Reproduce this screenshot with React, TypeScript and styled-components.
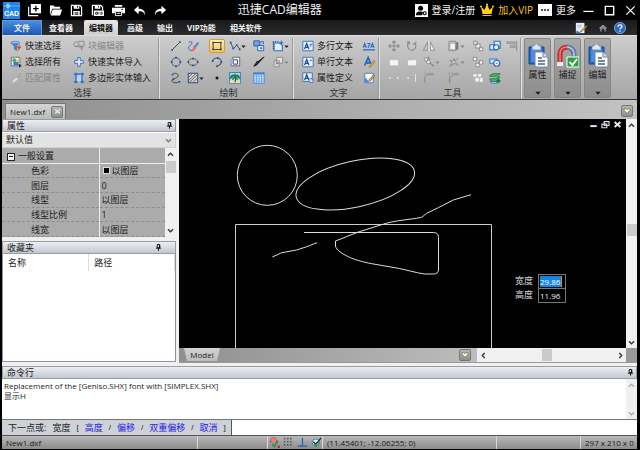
import React from "react";
import styled, { createGlobalStyle, css } from "styled-components";

const GlobalStyle = createGlobalStyle`
  *, *::before, *::after { box-sizing: border-box; }
  body { margin: 0; background: #000; }
  body, button, input, select, table {
    font-family: "Open Sans", "Noto Sans CJK SC", sans-serif;
    font-size: 9px;
    line-height: 12px;
    color: #1c1c1c;
  }
  button, input, select { margin: 0; padding: 0; border: 0; background: none; border-radius: 0; }
`;

/* ---------- icons ---------- */

const B = "#1d4fa8";
const G = "#858585";
const W = "#f4f4f4";

const dots = (pts: number[][], color = B) =>
  pts.map(([x, y], i) => <rect key={i} x={x - 1} y={y - 1} width="2" height="2" fill={color} />);

const icons: Record<string, React.ReactNode> = {
  newFile: (<><path d="M3 0h11v10H3z" fill="#fff" /><path d="M8.500 2v6M5.500 5h6" stroke="#000" strokeWidth="1.400" /><path d="M.7 3v9.500H11" fill="none" stroke="#fff" strokeWidth="1.200" /></>),
  open: (<><path d="M1 1.500h4l1 1.500h6v2H3.500L1 12z" fill="#fff" /><path d="M4 6h10l-2 6.500H1.800z" fill="#fff" /></>),
  save: (<><path d="M1.500 1.500h9l2 2v9h-11z" fill="none" stroke="#fff" strokeWidth="1.300" /><path d="M4 1.500h6V5H4zM3.500 7.500h7v5h-7z" fill="#fff" /><path d="M8 2v2M5 9.500h4M5 11h4" stroke="#000" /></>),
  saveAs: (<><path d="M1.500 12V1.500h9l2 2V7" fill="none" stroke="#fff" strokeWidth="1.300" /><path d="M4 1.500h6V5H4zM3 7h11v6H3z" fill="#fff" /><path d="M8 2v2M5 9h2v2H5zM8.500 9v2M10 9h2v2h-2" fill="none" stroke="#000" strokeWidth=".8" /></>),
  print: (<><path d="M3 1h8v2H3zM0 4h14v6h-3V8H3v2H0z" fill="#fff" /><path d="M3.700 8h6.600v4.500H3.700z" fill="#000" stroke="#fff" /><path d="M5 10h4" stroke="#fff" /><path d="M10 5.700h2" stroke="#000" /></>),
  undo: <path d="M6 2 1 6.500 6 11V8c4-.5 6 1 6.500 4C13.500 7.500 11 5 6 5z" fill="#fff" />,
  redo: <path d="M8 2l5 4.500L8 11V8c-4-.5-6 1-6.500 4C.5 7.500 3 5 8 5z" fill="#fff" />,
  user: (<><path d="M0 0h14v14H0z" fill="#fff" /><circle cx="6" cy="4.700" r="2.700" fill="#000" /><path d="M1 12c0-4 3-4 5-4 1.500 0 2.500.2 3 .6L8 10v2z" fill="#000" /><circle cx="10.500" cy="10" r="1.600" fill="none" stroke="#000" strokeWidth="1.200" /></>),
  crown: (<><path d="M1 3.500 4.500 7 7 1l2.500 6L13 3.500 11.500 11h-9z" fill="#ffd21c" /><path d="M2.500 12h9v1h-9z" fill="#f6b800" /><circle cx="7" cy="1.500" r="1" fill="#ffd21c" /><circle cx="1" cy="3.500" r="1" fill="#ffd21c" /><circle cx="13" cy="3.500" r="1" fill="#ffd21c" /></>),
  more: (<><path d="M0 1h14v12H0z" fill="#fff" /><path d="M3 7h2M6 7h2M9 7h2" stroke="#222" strokeWidth="1.600" /></>),
  min: <path d="M1.500 8h11" stroke="#fff" strokeWidth="1.300" />,
  max: <path d="M2.500 2.500h9v9h-9z" fill="none" stroke="#fff" strokeWidth="1.500" />,
  close: <path d="M2.500 2.500l9 9M11.500 2.500l-9 9" stroke="#fff" strokeWidth="1.300" />,
  notes: (<><path d="M1 1h10v12H1z" fill="#e7effc" /><path d="M3 4h5M3 6h4" stroke="#8fb4ea" /><path d="M13 4 7 10l-1 2 2-1 6-6z" fill="#f3a51b" stroke="#77410a" strokeWidth=".5" /><path d="M2 10l4 2-1 1H1z" fill="#3d7ad8" /></>),
  up: (<path d="M3 7.500 7 4l4 3.500M4.500 11V8.500L7 6.500l2.500 2V11" fill="none" stroke="#9aa2ae" strokeWidth="1.400" />),
  help: (<><circle cx="7" cy="7" r="6.500" fill="#2c66c4" stroke="#a9c8f4" strokeWidth=".8" /><path d="M4.800 5.500c0-3 4.500-2.700 4.500-.2C9.300 7 7 6.700 7 8.500" fill="none" stroke="#fff" strokeWidth="1.500" /><path d="M6.200 10h1.600v1.500H6.200z" fill="#fff" /></>),

  quick: (<><path d="M1 3h10L7.500 7v5L5 10.500V7z" fill="#3d8ede" stroke="#175297" strokeWidth=".6" /><ellipse cx="6" cy="3" rx="5" ry="1.500" fill="#90c8f6" stroke="#175297" strokeWidth=".5" /><path d="M12 4 7.500 9.500H10L8 14l5.500-6H11z" fill="#ef3d2e" /></>),
  selectAll: (<><path d="M1.500 1.500h10v10h-10z" fill="#e9f2fc" stroke="#222" strokeDasharray="1.500 1" /><circle cx="5" cy="5" r="2.300" fill="#4baf4d" /><path d="M4 7h6v4H4z" fill="#3778d2" /><path d="M7.500 4h3v3h-3z" fill="#efc53b" /><path d="M10 9l4 3-2 .3-1 1.700z" fill="#111" /></>),
  match: (<><path d="M12.500 1 8 6l2 2 3-5z" fill="#a7a7a7" /><path d="M8 6 3 9l-1 4c3 0 6-2 8-5z" fill="#dcdcdc" stroke="#a0a0a0" strokeWidth=".6" /></>),
  blockEdit: (<><circle cx="4" cy="5" r="3" fill="none" stroke={G} /><path d="M6 1.500h7v6H8M3 7h6M7 9l4-3" fill="none" stroke={G} /><path d="M8 8h4l-2 5z" fill="#999" /></>),
  cross: (<path d="M5.500 2h3v3.500H12v3H8.500V12h-3V8.500H2v-3h3.500z" fill="#eaf3ff" stroke="#2463bd" />),
  polySolid: (<><path d="M3 2.500h8v8H3z" fill="#b7d4f6" /><path d="M3.500 1v12M10.500 1v12M1 2.500h12M1 11.500h4M9 11.500h4" fill="none" stroke="#1f65c8" strokeWidth="1.500" /></>),

  line: (<><path d="M3 11 11 3" stroke="#333" />{dots([[2.500, 11.500], [11.500, 2.500]])}</>),
  sketch: (<><path d="M2 3c4-3 5 1 2 3s-3 5 0 6 4-1 4-2" fill="none" stroke="#235cb6" /><path d="M13 2 8 7l-1 3 3-1 4-5z" fill="#408fe5" /><path d="M8 7l3 2-3 3.500-2-1z" fill="#ef6a5a" /></>),
  rect: (<><path d="M2.500 3h9v8h-9z" fill="none" stroke="#444" strokeWidth="1.200" />{dots([[2.500, 3], [11.500, 3], [2.500, 11], [11.500, 11]])}</>),
  poly: (<><path d="M2 3l3 7 4-4 3.500 4.500" fill="none" stroke="#444" />{dots([[2, 3], [5, 10], [9, 6], [12.500, 11]])}</>),
  insert: (<><path d="M1 1h7v6H1z" fill="#6da7ea" stroke={B} /><path d="M5.500 6.500h7v6h-7z" fill="#e8f2ff" stroke={B} /><path d="M8 9.500h3M9.500 8v3M9 2h3v3" fill="none" stroke={B} /></>),
  region: (<><path d="M2.500 3.500h6L12 6v6.500H2.500z" fill="#e4f0ff" stroke="#2f6dc9" strokeWidth="1.300" /><path d="M1 2h7M1.500 2v10" stroke="#1b4796" strokeDasharray="1.500 1" strokeWidth="1.200" /><path d="M11 0l.8 2.200L14 3l-2.200.8L11 6l-.8-2.200L8 3l2.200-.8z" fill="#2f6dc9" /></>),
  circle: (<><circle cx="7" cy="7" r="5" fill="none" stroke="#555" />{dots([[7, 2], [12, 7], [7, 12], [2, 7]])}</>),
  ellipse: (<><ellipse cx="7" cy="7" rx="5.500" ry="4" fill="none" stroke="#555" />{dots([[7, 3], [12.500, 7], [7, 11], [1.500, 7]])}</>),
  arc: (<><path d="M2 6c1-5 9-5 10 0 0 3-2 5-5 5.500" fill="none" stroke="#555" strokeWidth="1.200" />{dots([[2, 6], [8, 2.500], [12, 7], [7, 12]])}</>),
  wipe: (<><path d="M4.500 1.500h8v10h-10v-7h2z" fill="#f2f6fd" stroke="#4a5b7d" /><path d="M5 4.500h5v5H5z" fill="none" stroke="#333" /><path d="M1 4h4v5H1z" fill="#8db5e8" /></>),
  brush: (<><path d="M13 1 6.500 8l-1-1z" fill="#111" stroke="#111" /><path d="M7 7 5 6 1 12l4-2z" fill="#23324f" stroke="#111" /></>),
  grayCopy: (<><path d="M5.500 1.500h7v7h-7zM2.500 5.500h6v7h-6z" fill="#e0e0e0" stroke={G} /><path d="M4 9.500l2-3 2 3z" fill={G} /></>),
  spline: (<><path d="M3 2.500c4-3 9 1 5 4-5 2-7 2-5 5 2 2 6 1 7 0" fill="none" stroke="#3a3a3a" />{dots([[3, 3], [4, 8.500], [11, 11.500]])}</>),
  hatch: (<><path d="M1.500 1.500h11v11h-11z" fill="#d9d4c4" stroke="#284f8f" strokeWidth="1.200" /><path d="M2 6l4-4M2 10l8-8M3 12l9-9M7 12l5-5" stroke="#555" /></>),
  point: <path d="M5.500 5.500h3v3h-3z" fill="#111" />,
  image: (<><path d="M.5.500h13v13H.5z" fill="#a6dcf5" stroke="#2a71bd" /><path d="M1 10h12v3H1z" fill="#f1dfa0" /><path d="M7 12c1-3 1-5 0-7" fill="none" stroke="#744a1d" strokeWidth="1.500" /><path d="M7 5C4 2 2 5 2 7l3-2M7 5c3-3 5 0 5 2L9 5M7 5l-3 4M7 5l3 4M7 5V2" fill="none" stroke="#178044" strokeWidth="1.600" /></>),
  table: (<><path d="M1 1h12v12H1z" fill="#eef6ff" stroke="#2f79d8" /><path d="M1 2h12" stroke="#2f79d8" strokeWidth="2" /><path d="M4 1v12M7 1v12M10 1v12M1 5h12M1 8h12M1 10.500h12" stroke="#5c9eea" /></>),

  mtext: (<><path d="M1 1.500h12v11H1z" fill="#e8f1ff" stroke="#3368b6" /><path d="M3 10.500 5.500 4 8 10.500M4 8.500h3" fill="none" stroke="#174da8" strokeWidth="1.500" /><path d="M9 5h3M9 7h2" stroke="#174da8" /></>),
  stext: (<><path d="M1 1.500h12v11H1z" fill="#e8f1ff" stroke="#3368b6" /><path d="M3 10.500 5.500 4 8 10.500M4 8.500h3" fill="none" stroke="#174da8" strokeWidth="1.500" /><path d="M9 5h3" stroke="#174da8" /></>),
  attr: (<><path d="M1 1h11v10H1z" fill="#e8f1ff" stroke="#3368b6" /><path d="M3 9.500 5.500 3 8 9.500M4 7.500h3" fill="none" stroke="#174da8" strokeWidth="1.500" /><circle cx="10.500" cy="10" r="2.500" fill="#c6dcf6" stroke="#275faf" strokeDasharray="1 .8" strokeWidth="1.500" /></>),
  textFit: (<><path d="M0 9l2-5 2 5M.8 7.500h2.400M5 4h3L6 9M9 9l2-5 2 5M9.800 7.500h2.400" fill="none" stroke="#2769c7" strokeWidth="1.200" /><path d="M0 11.500h14" stroke="#2769c7" strokeWidth="1.500" /></>),
  textStyle: (<><path d="M2 11 6 2l3 7M4 8h5" fill="none" stroke="#1c65cb" strokeWidth="2" /><path d="M13 5 8 11l-1 2 3-1 4-5z" fill="#efa62a" stroke="#725018" strokeWidth=".5" /></>),
  textEdit: (<><path d="M2 1.500h10v11H2z" fill="#f3f8ff" stroke="#3f78c4" /><path d="M3 6l4 6H2z" fill="#3e86e2" /><path d="M12.500 3 7 9l-.5 2L9 10l5-5.500z" fill="#e79f29" stroke="#333" strokeWidth=".5" /></>),

  move: (<path d="M7 1v12M1 7h12M5 3l2-2 2 2M5 11l2 2 2-2M3 5 1 7l2 2M11 5l2 2-2 2" fill="none" stroke={G} strokeWidth="1.200" />),
  rotate: (<path d="M4 2C0 5 2 11 6 12c4 .5 7-4 5-8l-3 1M11 4l1-2M4 2H1M4 2v3" fill="none" stroke={G} strokeWidth="1.200" />),
  mirror: (<><path d="M5.500 2v10h-5z" fill="#cecece" stroke={G} /><path d="M8.500 2v10h5z" fill="#ededed" stroke={G} /><path d="M7 1v12" stroke="#fff" /></>),
  array: (<><path d="M1 1.500h8v11H1z" fill="#bcbcbc" stroke="#8a8a8a" /><path d="M3 4.500h5v6H3z" fill={W} /><path d="M9.500 2.500H12v9H9.500z" fill="#777" /></>),
  stack: (<path d="M2 1.500h4v4H2zM4.500 4.500h5v5h-5zM8.500 8.500h4v4h-4z" fill="#ececec" stroke={G} />),
  blueBox: (<><path d="M6 1.500h7v8H6zM1 5.500h6v6H1z" fill="#dcecff" stroke="#2c6fca" strokeWidth="1.300" /><circle cx="8.500" cy="8.500" r="3" fill="#f0f7ff" stroke="#2563ba" strokeWidth="1.300" /></>),
  align: (<><path d="M1 2h10v2H1zM5 6h6v3H5z" fill="#aaa" stroke={G} strokeWidth=".6" /><path d="M12.500 1v12" stroke={G} /></>),
  boxA: (<path d="M1.500 4.500h2v-1h2v1h3v-1h2v1h2v7h-11z" fill={W} stroke="#b5b5b5" />),
  boxB: (<path d="M1.500 4.500h7v-1h2v1h2v7h-11z" fill={W} stroke="#b5b5b5" />),
  link: (<><circle cx="3.500" cy="4" r="2" fill="#e8e8e8" stroke={G} /><circle cx="6.500" cy="7" r="2.200" fill="#e8e8e8" stroke={G} /><path d="M8 8l5 4M8 5l-2-4" stroke={G} strokeWidth="1.400" /></>),
  explode: (<path d="M12 2 8 6l4 5-5-3-5 4 3-5-3-2 4 1 1-3 1 3M4 12l4-4" fill="#ddd" stroke={G} />),
  pair: (<path d="M1.500 1.500h4v4h-4zM8.500 5.500h4v4h-4zM4.500 8.500h4v4h-4z" fill={W} stroke={G} />),
  blueArc: (<><path d="M1 3.500h8v5H1z" fill="#cee4ff" stroke="#3279d5" strokeWidth="1.300" /><circle cx="9" cy="8.500" r="3.500" fill="#f4f9ff" stroke="#2563ba" strokeWidth="1.300" /><path d="M8 8.500h2" stroke={B} /></>),
  gap: (<path d="M1 5.500h3v3H1zM10 5.500h3v3h-3zM6 7h2" fill={W} stroke="#aaa" />),
  extend: (<><path d="M1 5.500h3v3H1zM5 7h5" fill={W} stroke="#aaa" /><path d="M10 2h2v10h-2z" fill={W} stroke="#aaa" /></>),
  fillet: (<><path d="M2 13V7c0-3 2-4 4-4h7" fill="none" stroke={G} /><path d="M1 1.500h12" stroke={G} strokeDasharray="1 1" /></>),
  chamfer: (<><path d="M2 13V7l4-4h7" fill="none" stroke={G} /><path d="M1.500 12V1.500H13" fill="none" stroke={G} strokeDasharray="1 1" /></>),
  union: (<><path d="M1 2h5v4H1zM8 6h5v6H8z" fill={W} stroke="#aaa" /><circle cx="9" cy="4" r="2.500" fill={W} stroke="#aaa" /><circle cx="6" cy="9" r="3" fill={W} stroke="#aaa" /></>),
  layers: (<><path d="M1 4l4-2h8l-4 3H1zM1 8h7l4-3v2l-4 4H2z" fill="#4dbf5d" stroke="#137d38" /><path d="M2 11h7v2H3z" fill="#d5f0d9" stroke="#2563ba" /><path d="M11 8v5M8.500 10.500h5" stroke="#087b27" strokeWidth="1.800" /></>),

  magnet: (<><path d="M2 5c-1 4 2 6 5 6s5-3 4-6z" fill="#bcd9f2" stroke="#3c78b8" /><circle cx="6" cy="4.500" r="3.800" fill="#ec8077" stroke="#c9463c" strokeWidth=".8" /><path d="M4 8.500 6.500 12 11 5" fill="none" stroke="#1b963a" strokeWidth="2" /><path d="M11 11h3v3h-3z" fill="#d22" /></>),
  gridDots: (<>{dots([[2, 2], [6, 2], [10, 2], [2, 6], [6, 6], [10, 6], [2, 10], [6, 10], [10, 10]], "#555")}</>),
  ortho: <path d="M7 1v10M1 11.500h12" stroke="#1f5fb6" strokeWidth="1.500" />,
  osnap: (<><circle cx="6" cy="7" r="4.500" fill="#e2f0ff" stroke="#2b6ab3" /><path d="M13 1 6 9 3 6" fill="none" stroke="#222" strokeWidth="1.500" /><path d="M4 9l2 3 5-6" fill="none" stroke="#1aa43d" strokeWidth="1.500" /></>),

  pin: (<path d="M5 2.500h4v5H5zM3 8h8M7 8v4M8.500 3v5" fill="none" stroke="#111" strokeWidth="1.500" />),
  mdiMin: <path d="M2 9.500h10" stroke="#e3e9ef" strokeWidth="3" />,
  mdiRestore: <path d="M5 2.500h7.500v6H5zM1.500 6.500H9v5.500H1.500z" fill="#000" stroke="#d4dde6" strokeWidth="1.800" />,
  mdiClose: <path d="M2.500 3l9 8M11.500 3l-9 8" stroke="#e3e9ef" strokeWidth="3" />,
  chevUp: <path d="M3 9l4-4 4 4" fill="none" stroke="currentColor" strokeWidth="2" />,
  chevDown: <path d="M3 5l4 4 4-4" fill="none" stroke="currentColor" strokeWidth="2" />,
  chevLeft: <path d="M9 3 5 7l4 4" fill="none" stroke="currentColor" strokeWidth="2" />,
  chevRight: <path d="M5 3l4 4-4 4" fill="none" stroke="currentColor" strokeWidth="2" />,
  caret: <path d="M1 4h12L7 11z" fill="currentColor" />,
  heart: <path d="M2 3h3l2 2 2-2h3v3l-5 5-5-5z" fill="#fffbd0" stroke="#555" />,
};

const Svg = styled.svg<{ $size: number }>`
  display: block;
  flex: none;
  width: ${(p) => p.$size}px;
  height: ${(p) => p.$size}px;
`;

const Icon = ({ name, size = 12 }: { name: string; size?: number }) => (
  <Svg $size={size} viewBox="0 0 14 14" aria-hidden="true">{icons[name]}</Svg>
);

/* ---------- frame ---------- */

const Window = styled.div`
  display: flex;
  flex-direction: column;
  height: 100vh;
  min-height: 400px;
  padding: 0 3px 1px 2px;
  background: #000;
  overflow: hidden;
`;

const TitleBar = styled.header`
  display: flex;
  align-items: center;
  height: 20px;
  flex: none;
  white-space: nowrap;
`;
const QuickAccess = styled.div`
  display: flex;
  align-items: center;
  gap: 8px;
`;
const Logo = styled.svg`
  width: 18px;
  height: 18px;
`;
const IconButton = styled.button`
  display: flex;
  align-items: center;
  justify-content: center;
`;
const Title = styled.h1`
  flex: 1;
  margin: 0;
  padding-right: 22px;
  text-align: center;
  font-size: 12px;
  line-height: 16px;
  font-weight: 400;
  color: #f2f2f2;
`;
const Account = styled.div`
  display: flex;
  align-items: center;
  gap: 5px;
`;
const AccountButton = styled.button<{ $gold?: boolean }>`
  display: flex;
  align-items: center;
  gap: 4px;
  font-size: 10px;
  line-height: 14px;
  color: ${(p) => (p.$gold ? "#f5c518" : "#f2f2f2")};
`;
const WindowControls = styled.div`
  display: flex;
  gap: 8px;
  padding-left: 6px;
`;

const TabBar = styled.nav`
  display: flex;
  align-items: stretch;
  height: 15px;
  flex: none;
  background: linear-gradient(#1a1a1c, #2c2c2e);
`;
const RibbonTab = styled.button<{ $kind?: "file" | "active" }>`
  padding: 0 7px;
  font-size: 8px;
  font-weight: 700;
  color: #f0f0f0;
  white-space: nowrap;
  ${(p) => p.$kind === "file" && css`
    padding: 0 11px;
    background: linear-gradient(#4a8de0, #1c56b4);
    border: 1px solid #5e9bea;
    border-bottom: 0;
  `}
  ${(p) => p.$kind === "active" && css`
    margin: 0 2px 0 4px;
    padding: 0 5px;
    color: #111;
    background: linear-gradient(#e6e6e6, #cfcfcf);
    border-radius: 2px 2px 0 0;
  `}
`;
const TabTools = styled.div`
  display: flex;
  align-items: center;
  gap: 5px;
  margin-left: auto;
  padding-right: 11px;
  color: #555;
`;

/* ---------- ribbon ---------- */

const Ribbon = styled.div`
  display: flex;
  height: 64px;
  flex: none;
  padding-top: 2px;
  background: linear-gradient(#cdcdcd, #bcbcbc 40%, #a6a6a6);
  border-top: 1px solid #dedede;
`;
const Group = styled.section<{ $width: number }>`
  display: flex;
  flex-direction: column;
  flex: 0 0 ${(p) => p.$width}px;
  border-right: 1px solid #e0e0e0;
  box-shadow: inset -1px 0 0 #999;
`;
const GroupLabel = styled.h2`
  margin: 0;
  padding-left: 4px;
  text-align: center;
  font-size: 9px;
  line-height: 13px;
  font-weight: 400;
  color: #333;
`;
const Commands = styled.div<{ $cols: string; $pad: number }>`
  display: grid;
  grid-template-columns: ${(p) => p.$cols};
  grid-auto-rows: 16px;
  align-items: center;
  padding-left: ${(p) => p.$pad}px;
`;
const Command = styled.button`
  display: flex;
  align-items: center;
  gap: 3px;
  white-space: nowrap;
  &:disabled { color: #858585; }
`;
const ToolButton = styled.button<{ $on?: boolean }>`
  display: flex;
  align-items: center;
  justify-self: start;
  height: 16px;
  padding: 0 2px;
  color: #222;
  &:disabled { color: #858585; }
  ${(p) => p.$on && css`
    height: 14px;
    padding: 0 1px;
    background: linear-gradient(#fff0b5, #ffc24a);
    border: 1px solid #d79a2c;
    border-radius: 2px;
  `}
`;
const BigButtons = styled.div`
  display: flex;
  gap: 3px;
  padding: 0 0 1px 2px;
`;
const BigButton = styled.button`
  display: flex;
  flex-direction: column;
  align-items: center;
  width: 27px;
  padding: 5px 0 1px;
  background: linear-gradient(#a8a8a8, #9a9a9a 50%, #8d8d8d);
  border: 1px solid #858585;
  border-radius: 2px;
  & > span { flex: 1; padding-top: 1px; }
`;
const BigIcon = styled.svg`
  width: 22px;
  height: 24px;
`;

/* ---------- document tabs ---------- */

const DocBar = styled.div`
  display: flex;
  align-items: flex-end;
  height: 20px;
  flex: none;
  padding-right: 4px;
  background: linear-gradient(90deg, #8f8f8f, #c2c2c2);
  border-top: 1px solid #333;
`;
const DocTab = styled.div`
  display: flex;
  align-items: center;
  gap: 6px;
  height: 16px;
  margin-left: 3px;
  padding: 0 2px 0 4px;
  font-size: 8px;
  background: linear-gradient(#d4d4d4, #bcbcbc);
  border: 1px solid #777;
  border-bottom: 0;
`;
const SmallButton = styled.button`
  display: flex;
  align-items: center;
  justify-content: center;
  width: 12px;
  height: 12px;
  background: linear-gradient(#b5b5b5, #8f8f8f);
  border: 1px solid #777;
  border-radius: 2px;
  color: #fffce0;
`;
const DocMenu = styled.div`
  margin-left: auto;
  padding-bottom: 2px;
`;

/* ---------- work area ---------- */

const Work = styled.main`
  display: flex;
  flex: 1;
  min-height: 0;
`;
const Side = styled.aside`
  display: flex;
  flex-direction: column;
  flex: 0 0 177px;
  background: #f0f0f0;
  padding: 0 3px 1px 0;
`;
const PanelHeader = styled.div<{ $pinRight: number }>`
  display: flex;
  align-items: center;
  justify-content: space-between;
  height: 13px;
  flex: none;
  padding: 0 ${(p) => p.$pinRight}px 0 4px;
  background: linear-gradient(#eceef2, #c3c7cf);
  border: 1px solid #999ca3;
`;
const PanelTitle = styled.h2`
  margin: 0;
  font-size: 9px;
  line-height: 11px;
  font-weight: 400;
`;
const SelectWrap = styled.label`
  display: grid;
  align-items: center;
  height: 16px;
  flex: none;
  background: #e3e3e3;
  border: 1px solid #d0d0d0;
  border-top-color: #fff;
  & > * { grid-area: 1 / 1; }
  & > svg { justify-self: end; margin-right: 2px; color: #777; pointer-events: none; }
`;
const Select = styled.select`
  appearance: none;
  width: 100%;
  padding-left: 3px;
  outline: 0;
`;
const Props = styled.div`
  display: flex;
  flex: 0 0 89px;
`;
const PropTable = styled.table`
  flex: 1;
  height: 89px;
  table-layout: fixed;
  border-collapse: collapse;
  background: #ababab;
  line-height: 11px;
  th, td {
    padding: 0 0 0 2px;
    font-weight: 400;
    text-align: left;
    border-bottom: 1px dashed #8d8d8d;
  }
  th { width: 97px; padding-left: 29px; border-right: 1px solid #eee; }
  thead tr { height: 15px; }
  thead th, thead td { border-bottom: 1px solid #eee; }
  thead th { padding-left: 5px; }
`;
const Expander = styled.button`
  width: 8px;
  height: 8px;
  margin-right: 3px;
  vertical-align: -1px;
  border: 1px solid #222;
  background: linear-gradient(#222, #222) center / 4px 1px no-repeat #f2f2f2;
`;
const Swatch = styled.span`
  display: inline-block;
  width: 7px;
  height: 7px;
  margin: 0 2px 0 1px;
  background: #000;
  border: 1px solid #ddd;
`;
const VScroll = styled.div<{ $top: number; $faint?: boolean }>`
  display: grid;
  grid-template-rows: 12px ${(p) => p.$top}fr 12px ${(p) => 100 - p.$top}fr 12px;
  justify-items: center;
  align-items: center;
  flex: 0 0 11px;
  background: #f0f0f0;
  color: ${(p) => (p.$faint ? "#aaa" : "#333")};
`;
const HScroll = styled.div`
  display: grid;
  grid-template-columns: 12px 46fr 12px 54fr 12px;
  justify-items: center;
  align-items: center;
  flex: 0 0 149px;
  background: #f0f0f0;
  color: #333;
`;
const Thumb = styled.div<{ $cell: string }>`
  grid-area: ${(p) => p.$cell};
  width: 10px;
  height: 12px;
  background: #cacaca;
`;
const ArrowButton = styled.button<{ $cell: string }>`
  grid-area: ${(p) => p.$cell};
  color: inherit;
`;
const Favorites = styled.div`
  display: flex;
  flex-direction: column;
  flex: 1;
  margin-top: 4px;
`;
const FavBody = styled.div`
  flex: 1;
  background: #fff;
  border: 1px solid #8d93a0;
  border-top: 0;
`;
const FavTable = styled.table`
  width: 100%;
  border-collapse: collapse;
  table-layout: fixed;
  th {
    height: 17px;
    padding: 0 0 0 5px;
    font-weight: 400;
    text-align: left;
    border-right: 1px solid #ddd;
  }
`;

const DrawColumn = styled.div`
  display: flex;
  flex-direction: column;
  flex: 1;
  min-width: 0;
`;
const DrawRow = styled.div`
  display: flex;
  flex: 1;
  min-height: 0;
`;
const Canvas = styled.div`
  position: relative;
  flex: 1;
  min-width: 0;
  background: #000;
  overflow: hidden;
`;
const Drawing = styled.svg`
  display: block;
  width: 100%;
  height: 100%;
  fill: none;
  stroke: #dcdcdc;
`;
const MdiButtons = styled.div`
  position: absolute;
  top: 1px;
  right: 4px;
  display: flex;
  gap: 3px;
`;
const DynamicInput = styled.div`
  position: absolute;
  left: 336px;
  top: 155px;
  display: grid;
  grid-template-columns: 23px 28px;
  grid-auto-rows: 14px;
  align-items: center;
  label { color: #ddd; }
  input {
    width: 28px;
    height: 15px;
    padding-left: 1px;
    font-size: 8px;
    color: #f0f0f0;
    background: #000;
    border: 1px solid #777;
    outline: 0;
  }
`;
const Field = styled.span`
  display: flex;
  align-items: center;
  width: 28px;
  height: 15px;
  padding-left: 1px;
  border: 1px solid #777;
`;
const SelectedInput = styled.input`
  && {
    width: 22px;
    height: 11px;
    padding: 0;
    border: 0;
    border-right: 1px solid #e08a3c;
    background: #1684e4;
    line-height: 11px;
    color: #fff;
  }
`;
const LayoutBar = styled.div`
  display: flex;
  height: 15px;
  flex: none;
  border-bottom: 1px solid #999;
  background: linear-gradient(90deg, #8f8f8f, #c0c0c0 70%, #999);
`;
const LayoutTab = styled.button`
  height: 13px;
  margin-left: 5px;
  width: 36px;
  clip-path: polygon(0 0, 100% 0, 33px 100%, 3px 100%);
  background: linear-gradient(#d2d2d2, #bdbdbd);
  font-size: 8px;
`;
const LayoutMenu = styled.div`
  display: flex;
  align-items: center;
  margin-left: auto;
  padding-right: 6px;
`;
const Corner = styled.div`
  flex: 0 0 11px;
  background: #999;
`;

/* ---------- command line and status ---------- */

const CommandPanel = styled.section`
  flex: none;
  padding-top: 3px;
  background: #f0f0f0;
`;
const Log = styled.div`
  display: flex;
  height: 41px;
  background: #fff;
  border-bottom: 1px solid #777;
`;
const LogText = styled.div`
  flex: 1;
  padding: 2px 2px 0;
  font-size: 8px;
  line-height: 10px;
  & > p { margin: 0; }
`;
const PromptRow = styled.div`
  display: flex;
  height: 15px;
`;
const Prompt = styled.div`
  display: flex;
  align-items: center;
  gap: 6px;
  flex: 0 0 230px;
  padding-left: 6px;
  background: #cdd1d8;
  border-right: 1px solid #555;
  white-space: nowrap;
`;
const Mark = styled.span`
  font-family: "Liberation Sans", sans-serif;
  font-size: 8px;
`;
const Option = styled.button`
  color: #1e1ee6;
`;
const PromptInput = styled.input`
  flex: 1;
  min-width: 0;
  background: #fff;
  outline: 0;
`;
const Status = styled.footer`
  display: flex;
  height: 14px;
  flex: none;
  background: linear-gradient(#b8b8b8, #8c8c8c);
  border-top: 1px solid #555;
  font-size: 8px;
`;
const Cell = styled.div<{ $width?: number }>`
  display: flex;
  align-items: center;
  gap: 3px;
  flex: ${(p) => (p.$width ? `0 0 ${p.$width}px` : "1")};
  padding-left: 4px;
  border-right: 1px solid #d8d8d8;
  white-space: nowrap;
  &:last-child { border-right: 0; }
`;
const StatusIcons = styled(Cell)`
  padding-left: 1px;
`;

type Tool = { icon: string; label: string; menu?: boolean; on?: boolean; off?: boolean } | null;

const drawTools: Tool[] = [
  { icon: "line", label: "直线" }, { icon: "sketch", label: "草图" }, { icon: "rect", label: "矩形", on: true },
  { icon: "poly", label: "多段线", menu: true }, { icon: "insert", label: "插入块" }, { icon: "region", label: "区域", menu: true },
  { icon: "circle", label: "圆" }, { icon: "ellipse", label: "椭圆" }, { icon: "arc", label: "圆弧" },
  { icon: "wipe", label: "遮罩" }, { icon: "brush", label: "画笔" }, { icon: "grayCopy", label: "副本", menu: true, off: true },
  { icon: "spline", label: "样条曲线" }, { icon: "hatch", label: "填充", menu: true }, { icon: "point", label: "点" },
  { icon: "image", label: "图像" }, { icon: "table", label: "表格" }, null,
];

const editTools: Tool[] = [
  { icon: "move", label: "移动", off: true }, { icon: "rotate", label: "旋转", off: true }, { icon: "mirror", label: "镜像", off: true },
  { icon: "array", label: "阵列", menu: true, off: true }, { icon: "stack", label: "前置", off: true }, { icon: "blueBox", label: "编组" },
  { icon: "align", label: "对齐", off: true },
  { icon: "boxA", label: "打断", off: true }, { icon: "boxB", label: "合并", off: true }, { icon: "link", label: "链接", menu: true, off: true },
  { icon: "explode", label: "分解", menu: true, off: true }, { icon: "pair", label: "后置", off: true }, { icon: "blueArc", label: "轮廓" }, null,
  { icon: "gap", label: "拉伸", off: true }, { icon: "extend", label: "延伸", off: true }, { icon: "fillet", label: "圆角", off: true },
  { icon: "chamfer", label: "倒角", off: true }, { icon: "union", label: "并集", off: true }, { icon: "layers", label: "图层" }, null,
];

const Tools = ({ items, cols, pad }: { items: Tool[]; cols: string; pad: number }) => (
  <Commands $cols={cols} $pad={pad}>
    {items.map((t, i) =>
      t ? (
        <ToolButton key={i} aria-label={t.label} disabled={t.off} $on={t.on}>
          <Icon name={t.icon} size={12} />
          {t.menu && <Icon name="caret" size={5} />}
        </ToolButton>
      ) : <span key={i} />
    )}
  </Commands>
);

const Clipboard = () => (
  <BigIcon viewBox="0 0 22 24" aria-hidden="true">
    <path d="M2 3h15v17H2z" fill="#2467c4" stroke="#174a96" />
    <path d="M4 5h11v13H4z" fill="#4c8de2" />
    <path d="M5 2h2l1-2h3l1 2h2v4H5z" fill="#dfe9f5" stroke="#63789a" strokeWidth=".7" />
    <path d="M8 8h8l5 5v10H8z" fill="#fff" stroke="#6d83a5" />
    <path d="M16 8v5h5" fill="#cfdcef" stroke="#6d83a5" />
    <path d="M11 14h4M11 17h7M11 20h7" stroke="#44618f" strokeWidth="1.300" />
  </BigIcon>
);

const Magnet = () => (
  <BigIcon viewBox="0 0 22 24" aria-hidden="true">
    <path d="M3 20V10c0-9 13-9 14 0" fill="none" stroke="#c62a2a" strokeWidth="5" />
    <path d="M17 15v-5c0-4-3-7-7-7" fill="none" stroke="#5e7fae" strokeWidth="5" />
    <path d="M3 20V10c0-5 3-7 7-7" fill="none" stroke="#f47d74" strokeWidth="1.500" />
    <path d="M17 15v-5c0-4-3-7-7-7" fill="none" stroke="#b7cbe6" strokeWidth="1.500" />
    <path d="M0 18h6v4H0z" fill="#e8eef5" />
    <path d="M10 13h12v10H10z" fill="#27a33a" stroke="#fff" />
    <path d="M12.500 18l3 3 4.500-6" fill="none" stroke="#fff" strokeWidth="2" />
  </BigIcon>
);

const properties: [string, string][] = [
  ["色彩", "以图层"], ["图层", "0"], ["线型", "以图层"], ["线型比例", "1"], ["线宽", "以图层"],
];

const VerticalScroll = ({ top, faint, thumb = true }: { top: number; faint?: boolean; thumb?: boolean }) => (
  <VScroll $top={top} $faint={faint}>
    <ArrowButton $cell="1 / 1" aria-label="向上"><Icon name="chevUp" size={9} /></ArrowButton>
    {thumb && <Thumb $cell="3 / 1" />}
    <ArrowButton $cell="5 / 1" aria-label="向下"><Icon name="chevDown" size={9} /></ArrowButton>
  </VScroll>
);

export default function App() {
  return (
    <>
      <GlobalStyle />
      <Window lang="zh-CN">
        <TitleBar>
          <QuickAccess>
            <Logo viewBox="0 0 18 18" aria-hidden="true">
              <rect x="1" y="1" width="17" height="17" fill="#1f86e6" />
              <path d="M1 5h17M6 1v17" stroke="#7fc0f8" strokeWidth=".7" />
              <circle cx="6" cy="5" r="1.500" fill="none" stroke="#fff" strokeWidth=".7" />
              <text x="2" y="15" fontFamily="Liberation Sans, sans-serif" fontSize="7" fontWeight="700" fill="#fff">CAD</text>
            </Logo>
            {[["newFile", "新建"], ["open", "打开"], ["save", "保存"], ["saveAs", "另存为"], ["print", "打印"], ["undo", "撤销"], ["redo", "重做"]].map(([n, l]) => (
              <IconButton key={n} aria-label={l}><Icon name={n} size={13} /></IconButton>
            ))}
          </QuickAccess>
          <Title>迅捷CAD编辑器</Title>
          <Account>
            <AccountButton><Icon name="user" size={13} />登录/注册</AccountButton>
            <AccountButton $gold><Icon name="crown" size={14} />加入VIP</AccountButton>
            <AccountButton><Icon name="more" size={14} />更多</AccountButton>
          </Account>
          <WindowControls>
            <IconButton aria-label="最小化"><Icon name="min" size={13} /></IconButton>
            <IconButton aria-label="最大化"><Icon name="max" size={13} /></IconButton>
            <IconButton aria-label="关闭"><Icon name="close" size={13} /></IconButton>
          </WindowControls>
        </TitleBar>

        <TabBar>
          <RibbonTab $kind="file">文件</RibbonTab>
          <RibbonTab>查看器</RibbonTab>
          <RibbonTab $kind="active">编辑器</RibbonTab>
          <RibbonTab>高级</RibbonTab>
          <RibbonTab>输出</RibbonTab>
          <RibbonTab>VIP功能</RibbonTab>
          <RibbonTab>相关软件</RibbonTab>
          <TabTools>
            <IconButton aria-label="样式"><Icon name="notes" size={12} /><Icon name="caret" size={5} /></IconButton>
            <IconButton aria-label="折叠功能区"><Icon name="up" size={12} /></IconButton>
            <IconButton aria-label="帮助"><Icon name="help" size={12} /></IconButton>
          </TabTools>
        </TabBar>

        <Ribbon>
          <Group $width={158}>
            <Commands $cols="63px 1fr" $pad={8}>
              <Command><Icon name="quick" />快速选择</Command>
              <Command disabled><Icon name="blockEdit" />块编辑器</Command>
              <Command><Icon name="selectAll" />选择所有</Command>
              <Command><Icon name="cross" />快速实体导入</Command>
              <Command disabled><Icon name="match" />匹配属性</Command>
              <Command><Icon name="polySolid" />多边形实体输入</Command>
            </Commands>
            <GroupLabel>选择</GroupLabel>
          </Group>
          <Group $width={134}>
            <Tools items={drawTools} cols="17px 24px 18px 24px 19px 1fr" pad={8} />
            <GroupLabel>绘制</GroupLabel>
          </Group>
          <Group $width={86}>
            <Commands $cols="59px 1fr" $pad={8}>
              <Command><Icon name="mtext" />多行文本</Command>
              <ToolButton aria-label="文字适应"><Icon name="textFit" /></ToolButton>
              <Command><Icon name="stext" />单行文本</Command>
              <ToolButton aria-label="文字样式"><Icon name="textStyle" /></ToolButton>
              <Command><Icon name="attr" />属性定义</Command>
              <ToolButton aria-label="编辑文字"><Icon name="textEdit" /></ToolButton>
            </Commands>
            <GroupLabel>文字</GroupLabel>
          </Group>
          <Group $width={142}>
            <Tools items={editTools} cols="18px 17px 25px 24px 17px 17px 1fr" pad={6} />
            <GroupLabel>工具</GroupLabel>
          </Group>
          <BigButtons>
            <BigButton><Clipboard /><span>属性</span><Icon name="caret" size={6} /></BigButton>
            <BigButton><Magnet /><span>捕捉</span><Icon name="caret" size={6} /></BigButton>
            <BigButton><Clipboard /><span>编辑</span><Icon name="caret" size={6} /></BigButton>
          </BigButtons>
        </Ribbon>

        <DocBar>
          <DocTab>
            New1.dxf
            <SmallButton aria-label="关闭文档"><Icon name="mdiClose" size={7} /></SmallButton>
          </DocTab>
          <DocMenu><SmallButton aria-label="文档列表"><Icon name="heart" size={8} /></SmallButton></DocMenu>
        </DocBar>

        <Work>
          <Side>
            <PanelHeader $pinRight={1}>
              <PanelTitle>属性</PanelTitle>
              <IconButton aria-label="固定属性"><Icon name="pin" size={9} /></IconButton>
            </PanelHeader>
            <SelectWrap>
              <Select aria-label="对象"><option>默认值</option></Select>
              <Icon name="chevDown" size={9} />
            </SelectWrap>
            <Props>
              <PropTable>
                <thead>
                  <tr><th><Expander aria-label="折叠" />一般设置</th><td /></tr>
                </thead>
                <tbody>
                  {properties.map(([name, value], i) => (
                    <tr key={name}><th scope="row">{name}</th><td>{i === 0 && <Swatch />}{value}</td></tr>
                  ))}
                </tbody>
              </PropTable>
              <VerticalScroll top={1} />
            </Props>
            <Favorites>
              <PanelHeader $pinRight={12}>
                <PanelTitle>收藏夹</PanelTitle>
                <IconButton aria-label="固定收藏夹"><Icon name="pin" size={9} /></IconButton>
              </PanelHeader>
              <FavBody>
                <FavTable>
                  <thead><tr><th>名称</th><th>路径</th></tr></thead>
                </FavTable>
              </FavBody>
            </Favorites>
          </Side>

          <DrawColumn>
            <DrawRow>
              <Canvas>
                <Drawing>
                  <circle cx="88.300" cy="56.300" r="30" />
                  <ellipse cx="176.300" cy="65" rx="60.500" ry="23" transform="rotate(-12.400 176.300 65)" />
                  <path d="M56.500 400V105.500H312.500V400" stroke="#ccc" />
                  <path d="M125 113.500H254.300Q259.500 113.500 259.500 118.300V151Q259 155 254.300 155H245.300C236 153.500 228 151 219.300 149.300C210 147.500 202 146.500 192.700 144.700S175 140.500 169.300 137.700S157 131 156.500 127V122L179.300 113L202.700 105.700C216 101 230 101 242.700 98.300L247.700 94.300L259.300 88.700L274.300 81L292 75.700" />
                  <path d="M93.300 138L102.700 133.700L117.700 131L127.700 127.700L138 123.700" />
                </Drawing>
                <MdiButtons>
                  <IconButton aria-label="最小化文档"><Icon name="mdiMin" size={9} /></IconButton>
                  <IconButton aria-label="还原文档"><Icon name="mdiRestore" size={9} /></IconButton>
                  <IconButton aria-label="关闭图纸"><Icon name="mdiClose" size={9} /></IconButton>
                </MdiButtons>
                <DynamicInput>
                  <label htmlFor="w">宽度</label>
                  <Field><SelectedInput id="w" defaultValue="29.86" /></Field>
                  <label htmlFor="h">高度</label>
                  <input id="h" defaultValue="11.96" />
                </DynamicInput>
              </Canvas>
              <VerticalScroll top={48} />
            </DrawRow>
            <LayoutBar>
              <LayoutTab>Model</LayoutTab>
              <LayoutMenu><SmallButton aria-label="布局列表"><Icon name="heart" size={8} /></SmallButton></LayoutMenu>
              <HScroll>
                <ArrowButton $cell="1 / 1" aria-label="向左"><Icon name="chevLeft" size={9} /></ArrowButton>
                <Thumb $cell="1 / 3" />
                <ArrowButton $cell="1 / 5" aria-label="向右"><Icon name="chevRight" size={9} /></ArrowButton>
              </HScroll>
              <Corner />
            </LayoutBar>
          </DrawColumn>
        </Work>

        <CommandPanel>
          <PanelHeader $pinRight={1}>
            <PanelTitle>命令行</PanelTitle>
            <IconButton aria-label="固定命令行"><Icon name="pin" size={9} /></IconButton>
          </PanelHeader>
          <Log>
            <LogText>
              <p>Replacement of the [Geniso.SHX] font with [SIMPLEX.SHX]</p>
              <p>显示H</p>
            </LogText>
            <VerticalScroll top={50} faint thumb={false} />
          </Log>
          <PromptRow>
            <Prompt>
              <span>下一点或:</span><span>宽度</span><Mark>[</Mark>
              <Option>高度</Option><Mark>/</Mark><Option>偏移</Option><Mark>/</Mark>
              <Option>双重偏移</Option><Mark>/</Mark><Option>取消</Option><Mark>]</Mark>
            </Prompt>
            <PromptInput aria-label="命令" />
          </PromptRow>
        </CommandPanel>

        <Status>
          <Cell $width={196}>New1.dxf</Cell>
          <Cell $width={70} />
          <StatusIcons $width={54}>
            <IconButton aria-label="捕捉"><Icon name="magnet" size={11} /></IconButton>
            <IconButton aria-label="栅格"><Icon name="gridDots" size={11} /></IconButton>
            <IconButton aria-label="正交"><Icon name="ortho" size={11} /></IconButton>
            <IconButton aria-label="对象捕捉"><Icon name="osnap" size={11} /></IconButton>
          </StatusIcons>
          <Cell>(11.45401; -12.06255; 0)</Cell>
          <Cell $width={84} />
          <Cell $width={56}>297 x 210 x 0</Cell>
        </Status>
      </Window>
    </>
  );
}
